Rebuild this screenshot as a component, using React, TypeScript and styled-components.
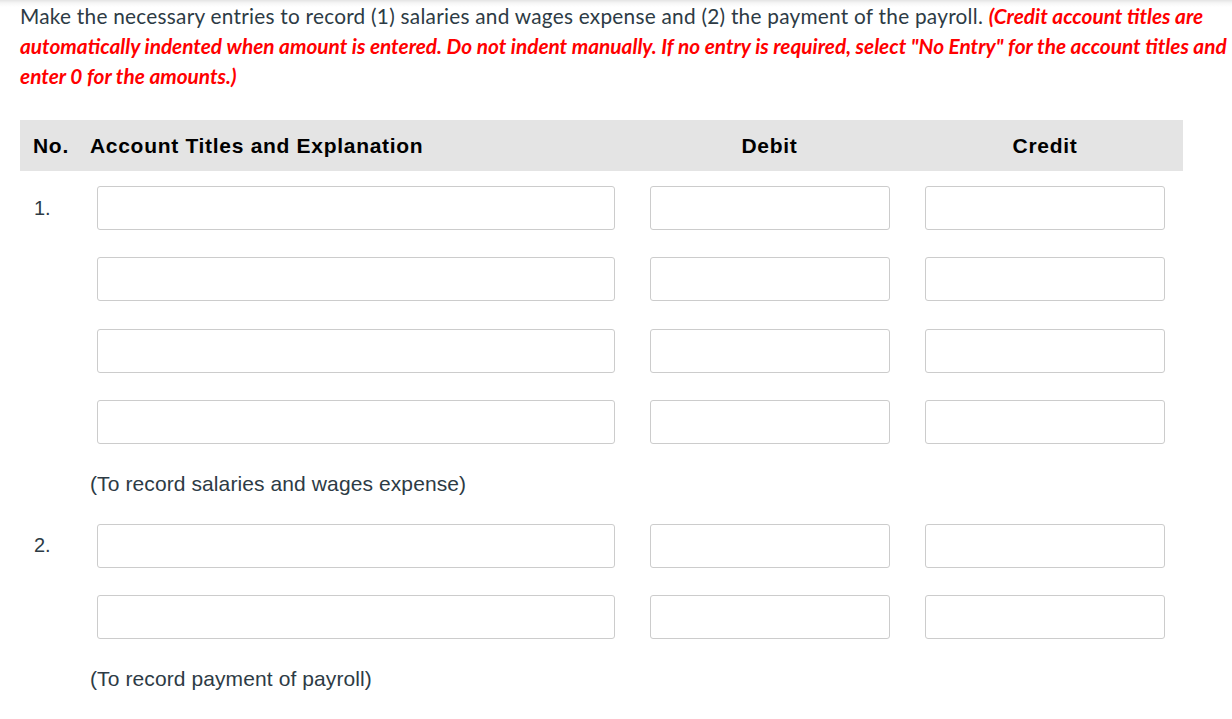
import React from "react";
import styled, { createGlobalStyle } from "styled-components";

const GlobalStyle = createGlobalStyle`
  html, body {
    margin: 0;
    padding: 0;
    background: #ffffff;
  }
  * { box-sizing: border-box; }
`;

const Page = styled.div`
  width: 1232px;
  min-height: 719px;
  padding: 1px 0 0 20px;
  background: linear-gradient(#e4e4e4 0px, #f6f6f6 3px, #ffffff 7px) no-repeat;
`;

const Instructions = styled.p`
  margin: 0;
  width: 1212px;
  font-family: Lato, "Open Sans", sans-serif;
  font-size: 20.8px;
  line-height: 30px;
  letter-spacing: 0.25px;
  color: #2d3b45;
`;

const Emphasis = styled.span`
  color: #ff0000;
  font-weight: 700;
  font-style: italic;
  letter-spacing: 0;
`;

const Table = styled.div`
  width: 1163px;
  margin-top: 29px;
  font-family: "Liberation Sans", Arial, sans-serif;
`;

const Columns = styled.div`
  display: grid;
  grid-template-columns: 70px 542px 275px 276px;
  align-items: center;
`;

const HeaderBar = styled(Columns)`
  height: 51px;
  background: #e4e4e4;
  margin-bottom: 15px;
`;

const HeaderCell = styled.div<{ $center?: boolean; $pad?: number }>`
  font-size: 21px;
  font-weight: 700;
  letter-spacing: 0.7px;
  color: #000;
  padding-left: ${(p) => p.$pad ?? 0}px;
  text-align: ${(p) => (p.$center ? "center" : "left")};
`;

const Entry = styled.div`
  display: flex;
  flex-direction: column;
`;

const Lines = styled.div`
  display: flex;
  flex-direction: column;
  gap: 27.3px;
`;

const EntryRow = styled(Columns)`
  height: 44px;
`;

const NumberCell = styled.div`
  padding-left: 14px;
  font-size: 20px;
  color: #2d3b45;
`;

const Field = styled.input<{ $ml: number; $w: number }>`
  display: block;
  margin-left: ${(p) => p.$ml}px;
  width: ${(p) => p.$w}px;
  height: 44px;
  border: 1px solid #cccccc;
  border-radius: 3px;
  background: #fff;
  outline: none;
  font-size: 16px;
  padding: 0 8px;
`;

const Memo = styled.div`
  height: 80px;
  display: flex;
  align-items: center;
  padding-left: 70px;
  font-size: 21px;
  letter-spacing: 0.1px;
  color: #2d3b45;
`;

type EntryDef = { no: string; lines: number; memo: string };

const entries: EntryDef[] = [
  { no: "1.", lines: 4, memo: "(To record salaries and wages expense)" },
  { no: "2.", lines: 2, memo: "(To record payment of payroll)" },
];

export default function App() {
  return (
    <>
      <GlobalStyle />
      <Page>
        <Instructions>
          Make the necessary entries to record (1) salaries and wages expense and (2) the payment of the payroll.{" "}
          <Emphasis>
            (Credit account titles are automatically indented when amount is entered. Do not indent manually. If no
            entry is required, select "No Entry" for the account titles and enter 0 for the amounts.)
          </Emphasis>
        </Instructions>
        <Table>
          <HeaderBar>
            <HeaderCell $pad={13}>No.</HeaderCell>
            <HeaderCell>Account Titles and Explanation</HeaderCell>
            <HeaderCell $center>Debit</HeaderCell>
            <HeaderCell $center>Credit</HeaderCell>
          </HeaderBar>
          {entries.map((e) => (
            <Entry key={e.no}>
              <Lines>
                {Array.from({ length: e.lines }).map((_, i) => (
                  <EntryRow key={i}>
                    <NumberCell>{i === 0 ? e.no : ""}</NumberCell>
                    <Field $ml={7} $w={518} />
                    <Field $ml={18} $w={240} />
                    <Field $ml={18} $w={240} />
                  </EntryRow>
                ))}
              </Lines>
              <Memo>{e.memo}</Memo>
            </Entry>
          ))}
        </Table>
      </Page>
    </>
  );
}
